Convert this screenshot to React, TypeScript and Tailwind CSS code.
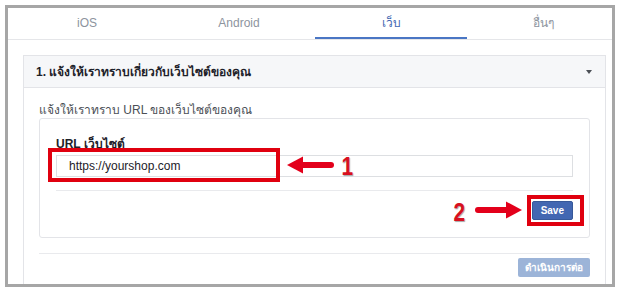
import type { ReactNode } from "react";

const tabs = ["iOS", "Android", "เว็บ", "อื่นๆ"];
const active = 2;

function Arrow({ dir }: { dir: "left" | "right" }) {
  return (
    <svg width="50" height="20" viewBox="0 0 50 20" className={dir === "right" ? "rotate-180" : ""}>
      <path d="M2 10 L18 1.5 L18 18.5 Z" fill="#e3001b" />
      <path d="M16 10 H46" stroke="#e3001b" strokeWidth="6" strokeLinecap="round" />
    </svg>
  );
}

function Mark({ children }: { children: ReactNode }) {
  return (
    <span className="text-[26px] leading-none font-bold text-[#d8101f] [text-shadow:1px_1px_1px_rgba(0,0,0,0.35)] scale-x-[0.8] inline-block">
      {children}
    </span>
  );
}

export default function App() {
  return (
    <div className="relative w-[621px] h-[292px] bg-white overflow-hidden font-['Liberation_Sans',_Tahoma,_sans-serif] text-[#1d2129]">
      <div className="ml-[5px] mt-[5px] w-[610px] h-[282px] border-[3px] border-[#a6a6a6] overflow-hidden">
        {/* tabs */}
        <div className="flex h-[32px] border-b border-[#e5e6e9] pl-[3px]">
          {tabs.map((t, i) => (
            <div
              key={t}
              className={
                "shrink-0 w-[152px] flex items-center justify-center text-[12px] border-b-2 " +
                (i === active ? "border-[#4a76c4] text-[#4267b2]" : "border-transparent text-[#8d949e]")
              }
            >
              {t}
            </div>
          ))}
        </div>

        {/* section */}
        <div className="ml-[15px] mt-[15px] w-[583px]">
          <div className="h-[33px] flex items-center justify-between pl-[12px] pr-[13px] bg-[#f6f7f9] border border-[#e3e4e8] text-[12px] font-bold">
            <span>1. แจ้งให้เราทราบเกี่ยวกับเว็บไซต์ของคุณ</span>
            <svg width="6" height="4" viewBox="0 0 6 4">
              <path d="M0 0 H6 L3 4 Z" fill="#4b4f56" />
            </svg>
          </div>
          <div className="border-x border-[#e3e4e8] px-[15px] pb-[20px]">
            <p className="pt-[14px] text-[12px] text-[#4b4f56] leading-[16px]">แจ้งให้เราทราบ URL ของเว็บไซต์ของคุณ</p>
            <div className="border border-[#e3e4e8] rounded-[3px] px-[16px] pt-[18px] pb-[17px]">
              <div className="text-[12px] font-bold leading-[14px]">URL เว็บไซต์</div>
              <div className="mt-[4px] h-[22px] border border-[#dddfe2] flex items-center pl-[12px] text-[12px]">
                https://yourshop.com
              </div>
              <div className="mt-[13px] border-t border-[#e9eaed] pt-[10px] flex justify-end">
                <button className="h-[19px] px-[8px] bg-[#4267b2] border border-[#365899] rounded-[2px] text-white text-[10px] font-bold leading-none">
                  Save
                </button>
              </div>
            </div>
            <div className="mt-[15px] border-t border-[#e9eaed] pt-[4px] flex justify-end">
              <button className="h-[19px] px-[7px] bg-[#9cb4d8] rounded-[2px] text-white text-[10px] font-bold leading-none">
                ดำเนินการต่อ
              </button>
            </div>
          </div>
        </div>
      </div>

      {/* annotations */}
      <div className="absolute left-[48px] top-[148px] w-[232px] h-[34px] border-[4px] border-[#e0000f]" />
      <div className="absolute left-[285px] top-[155px]">
        <Arrow dir="left" />
      </div>
      <div className="absolute left-[340px] top-[153px]">
        <Mark>1</Mark>
      </div>
      <div className="absolute left-[452px] top-[199px]">
        <Mark>2</Mark>
      </div>
      <div className="absolute left-[474px] top-[200px]">
        <Arrow dir="right" />
      </div>
      <div className="absolute left-[527px] top-[195px] w-[57px] h-[31px] border-[4px] border-[#e0000f]" />
    </div>
  );
}
